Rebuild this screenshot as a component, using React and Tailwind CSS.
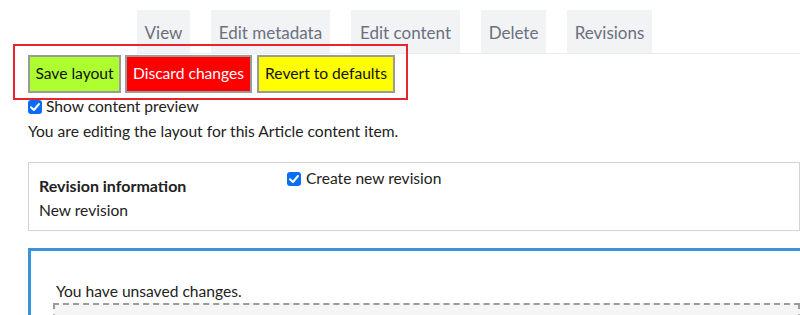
import React from "react";

const font = { fontFamily: "Lato, 'Noto Sans', sans-serif" };

function Check() {
  return (
    <span className="inline-flex h-[14px] w-[14px] items-center justify-center rounded-[3px] bg-[#0b6cf5]">
      <svg viewBox="0 0 14 14" className="h-[14px] w-[14px]">
        <path d="M3 7.2 L5.9 10 L11 4" fill="none" stroke="white" strokeWidth="2" strokeLinecap="round" strokeLinejoin="round" />
      </svg>
    </span>
  );
}

export default function App() {
  const tabs = [
    ["View", "w-[53px]"],
    ["Edit metadata", "w-[119px]"],
    ["Edit content", "w-[109px]"],
    ["Delete", "w-[65px]"],
    ["Revisions", "w-[85px]"],
  ];
  return (
    <div className="relative h-[315px] w-[800px] overflow-hidden bg-white text-[15.6px] text-[#222]" style={font}>
      <div className="ml-[137px] flex gap-[21px] border-b border-[#ececf0] pt-[10px]">
        {tabs.map(([t, w]) => (
          <div key={t} className={`flex h-[43px] items-center justify-center bg-[#f2f3f5] pt-[2px] text-[17px] text-[#6b7080] ${w}`}>
            {t}
          </div>
        ))}
      </div>
      <div className="flex pl-[28px] pt-[1px]">
        <button className="h-[38px] w-[93px] border-2 border-[#9a9a9a] bg-[#adff2f] text-[#111]">Save layout</button>
        <button className="ml-[4px] h-[38px] w-[127px] border-2 border-[#9a9a9a] bg-[#ff0000] text-white">Discard changes</button>
        <button className="ml-[5px] h-[38px] w-[138px] border-2 border-[#9a9a9a] bg-[#ffff00] text-[#111]">Revert to defaults</button>
      </div>
      <div className="mt-[6px] flex h-[16px] items-center gap-[4px] pl-[28px]">
        <Check />
        <span>Show content preview</span>
      </div>
      <div className="pl-[28px] pt-[6px] leading-[20px]">You are editing the layout for this Article content item.</div>
      <div className="ml-[28px] mt-[21px] flex h-[69px] border border-[#d4d4d4]">
        <div className="w-[258px] pl-[10px] pt-[11px] leading-[24px]">
          <div className="text-[16px] font-bold">Revision information</div>
          <div>New revision</div>
        </div>
        <div className="flex h-[30px] items-center gap-[5px] pt-[2px]">
          <Check />
          <span>Create new revision</span>
        </div>
      </div>
      <div className="ml-[28px] mt-[17px] h-[80px] border-l-[3px] border-t-[3px] border-[#3a94dc] pl-[25px] pt-[30px]">
        <div className="leading-[20px]">You have unsaved changes.</div>
        <div className="ml-[-3px] mt-[2px] h-[40px] border-2 border-dashed border-[#9c9c9c] bg-[#f5f5f5]" />
      </div>
      <div className="pointer-events-none absolute left-[13px] top-[44px] h-[56px] w-[395px] border-2 border-[#e5262e]" />
    </div>
  );
}
